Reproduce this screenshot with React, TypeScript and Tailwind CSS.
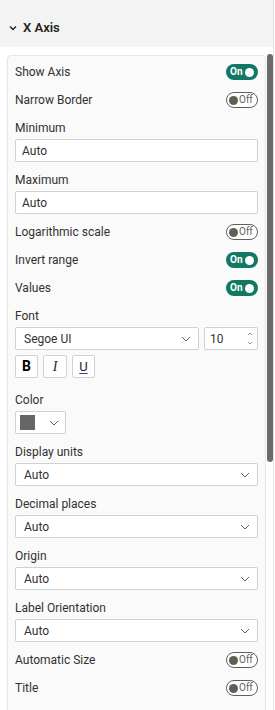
import React from "react";

const FONT = { fontFamily: '"Segoe UI", Roboto, "Liberation Sans", sans-serif' };

function ToggleOn() {
  return (
    <div className="flex h-[16px] w-[32px] items-center justify-between rounded-full bg-[#117865] pl-[4px] pr-[4px]">
      <span className="text-[10px] font-bold leading-none text-white">On</span>
      <span className="h-[9px] w-[9px] rounded-full bg-white" />
    </div>
  );
}

function ToggleOff() {
  return (
    <div className="flex h-[16px] w-[32px] items-center gap-[1px] rounded-full border border-[#605e5c] bg-white pl-[2px] pr-[2px]">
      <span className="h-[9px] w-[9px] rounded-full bg-[#605e5c]" />
      <span className="text-[10px] leading-none text-[#605e5c]">Off</span>
    </div>
  );
}

function ToggleRow({ label, on }: { label: string; on: boolean }) {
  return (
    <div className="flex h-[28px] items-center justify-between">
      <span className="text-[12px] text-[#323130]">{label}</span>
      {on ? <ToggleOn /> : <ToggleOff />}
    </div>
  );
}

function Label({ text, className = "" }: { text: string; className?: string }) {
  return (
    <div className={`flex h-[20px] items-center text-[12px] text-[#323130] ${className}`}>{text}</div>
  );
}

function Chevron({ className = "" }: { className?: string }) {
  return (
    <svg width="10" height="6" viewBox="0 0 10 6" className={className} fill="none">
      <path d="M1 1 L5 5 L9 1" stroke="#605e5c" strokeWidth="1" />
    </svg>
  );
}

function TextInput({ value }: { value: string }) {
  return (
    <div className="mt-[1px] flex h-[23px] items-center rounded-[2px] border border-[#d1d1d1] bg-white pl-[6px] text-[12px] text-[#323130]">
      {value}
    </div>
  );
}

function Select({ value, className = "" }: { value: string; className?: string }) {
  return (
    <div
      className={`mt-[1px] flex h-[23px] items-center justify-between rounded-[2px] border border-[#d1d1d1] bg-white pl-[8px] pr-[7px] text-[12px] text-[#323130] ${className}`}
    >
      <span>{value}</span>
      <Chevron />
    </div>
  );
}

export default function App() {
  return (
    <div className="relative h-[710px] w-[275px] overflow-hidden bg-white" style={FONT}>
      <div className="h-[710px] w-[274px] border-r border-[#e1e1e1]">
        {/* Header */}
        <div className="h-[47px] bg-[#f3f3f3] pt-[19px]">
          <div className="flex h-[18px] items-center pl-[9px]">
            <svg width="8" height="6" viewBox="0 0 8 6" fill="none">
              <path d="M1 1.5 L4 4.5 L7 1.5" stroke="#252423" strokeWidth="1.4" />
            </svg>
            <span className="ml-[6px] text-[13px] font-semibold text-[#252423]">X Axis</span>
          </div>
        </div>

        {/* Card */}
        <div className="ml-[7px] mt-[8px] h-[680px] w-[259px] rounded-[4px] border border-[#e6e6e6] bg-[#fafafa] px-[7px] pt-[2px] shadow-[0_1px_2px_rgba(0,0,0,0.06)]">
          <ToggleRow label="Show Axis" on />
          <ToggleRow label="Narrow Border" on={false} />

          <Label text="Minimum" className="mt-[4px]" />
          <TextInput value="Auto" />
          <Label text="Maximum" className="mt-[8px]" />
          <TextInput value="Auto" />

          <div className="mt-[4px]">
            <ToggleRow label="Logarithmic scale" on={false} />
            <ToggleRow label="Invert range" on />
            <ToggleRow label="Values" on />
          </div>

          <Label text="Font" className="mt-[4px]" />
          <div className="mt-[1px] flex gap-[5px]">
            <div className="flex h-[23px] flex-1 items-center justify-between rounded-[2px] border border-[#d1d1d1] bg-white pl-[8px] pr-[7px] text-[12px] text-[#323130]">
              <span>Segoe UI</span>
              <Chevron />
            </div>
            <div className="flex h-[23px] w-[54px] items-center justify-between rounded-[2px] border border-[#d1d1d1] bg-white pl-[5px] pr-[4px] text-[12px] text-[#323130]">
              <span>10</span>
              <div className="flex flex-col gap-[5px]">
                <svg width="6" height="4" viewBox="0 0 6 4" fill="none">
                  <path d="M1 3 L3 1 L5 3" stroke="#8a8886" strokeWidth="0.9" />
                </svg>
                <svg width="6" height="4" viewBox="0 0 6 4" fill="none">
                  <path d="M1 1 L3 3 L5 1" stroke="#8a8886" strokeWidth="0.9" />
                </svg>
              </div>
            </div>
          </div>

          <div className="mt-[5px] flex gap-[5px]">
            <div className="flex h-[23px] w-[23px] items-center justify-center rounded-[2px] border border-[#d1d1d1] bg-white text-[14px] font-bold text-[#000]">
              B
            </div>
            <div
              className="flex h-[23px] w-[24px] items-center justify-center rounded-[2px] border border-[#d1d1d1] bg-white text-[14px] italic text-[#252423]"
              style={{ fontFamily: '"Liberation Serif", serif' }}
            >
              I
            </div>
            <div className="flex h-[23px] w-[23px] items-center justify-center rounded-[2px] border border-[#d1d1d1] bg-white text-[13px] text-[#252423] underline decoration-[#3b3a9e] underline-offset-[2px]">
              U
            </div>
          </div>

          <Label text="Color" className="mt-[12px]" />
          <div className="mt-[1px] flex h-[23px] w-[51px] items-center justify-between rounded-[2px] border border-[#d1d1d1] bg-white pl-[4px] pr-[6px]">
            <span className="h-[15px] w-[15px] bg-[#666666]" />
            <Chevron />
          </div>

          <Label text="Display units" className="mt-[8px]" />
          <Select value="Auto" />
          <Label text="Decimal places" className="mt-[8px]" />
          <Select value="Auto" />
          <Label text="Origin" className="mt-[8px]" />
          <Select value="Auto" />
          <Label text="Label Orientation" className="mt-[8px]" />
          <Select value="Auto" />

          <div className="mt-[4px]">
            <ToggleRow label="Automatic Size" on={false} />
            <ToggleRow label="Title" on={false} />
          </div>
        </div>
      </div>

      {/* Scrollbar thumb overlay */}
      <div className="absolute left-[267px] top-[54px] h-[408px] w-[6px] rounded-full bg-[#6b6b6b]" />
    </div>
  );
}
